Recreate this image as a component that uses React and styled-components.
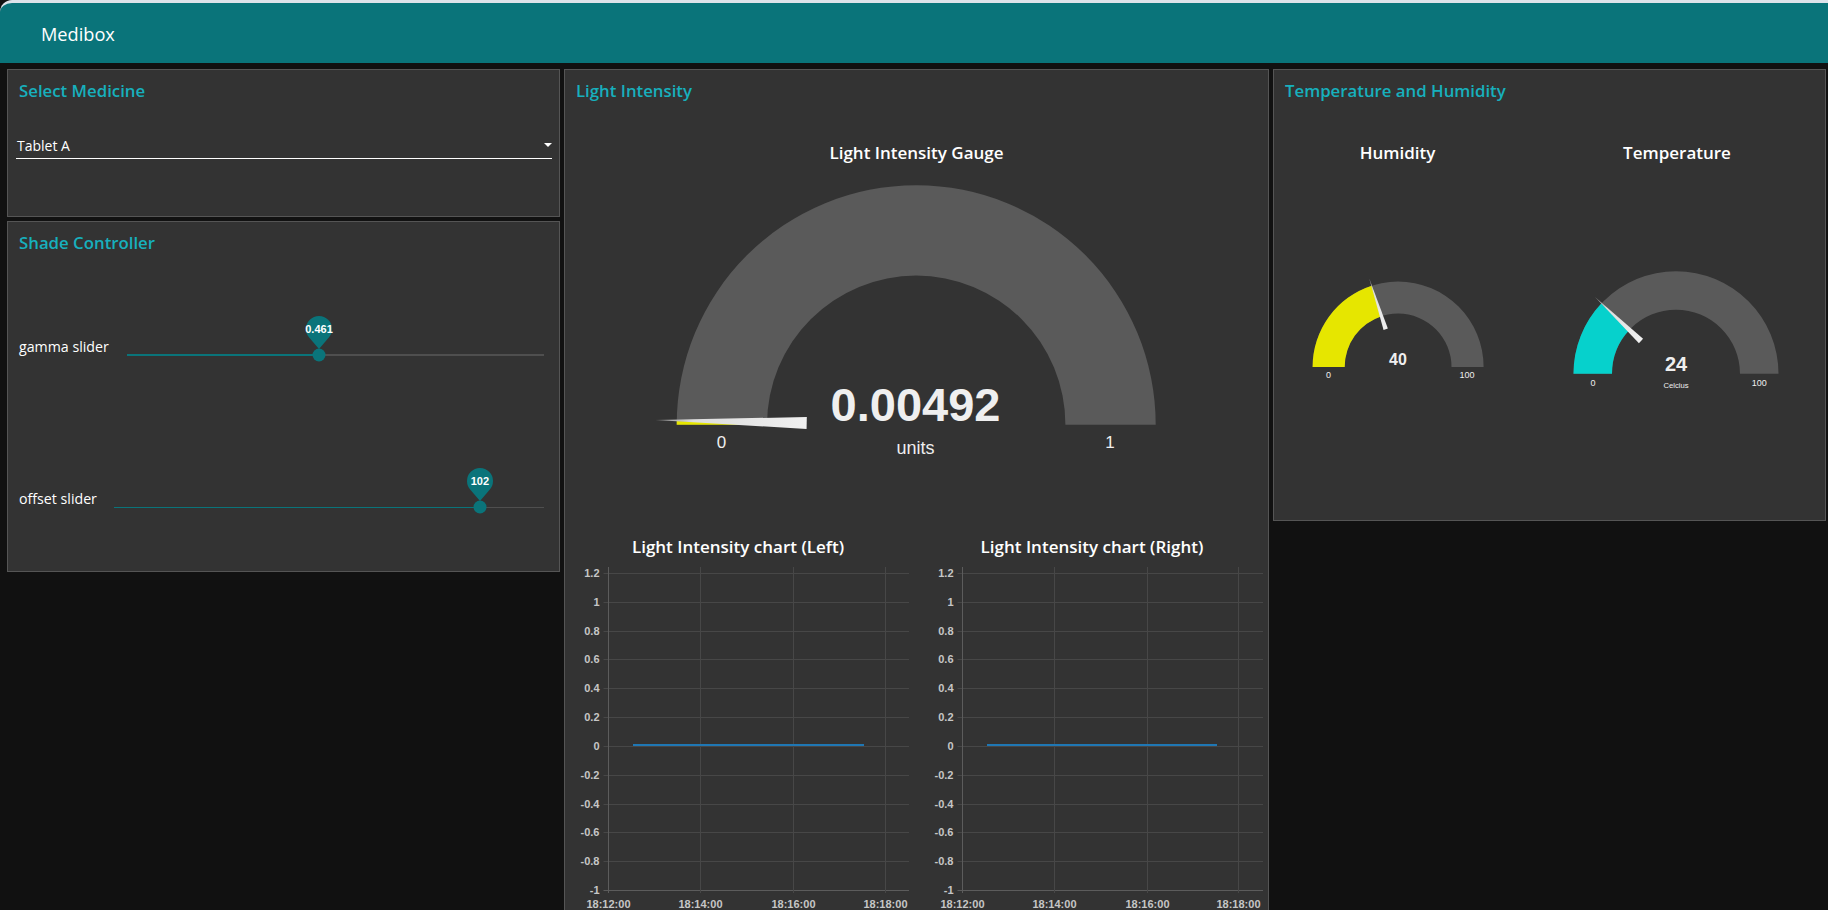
import React from 'react'
import styled, { createGlobalStyle } from 'styled-components'

const TEAL = '#0a747a'
const ARC = '#5a5a5a'
const UI_FONT = "'Open Sans', 'Noto Sans', sans-serif"
const CHART_FONT = "'Liberation Sans', Arial, sans-serif"

// point on a half ring, value is 0..1 from the left end
const ringPoint = (cx, cy, r, v) => {
  const a = Math.PI * (1 - v)
  return [cx + r * Math.cos(a), cy - r * Math.sin(a)]
}

const ringPath = (cx, cy, outer, inner, from, to) => {
  const [x1, y1] = ringPoint(cx, cy, outer, from)
  const [x2, y2] = ringPoint(cx, cy, outer, to)
  const [x3, y3] = ringPoint(cx, cy, inner, to)
  const [x4, y4] = ringPoint(cx, cy, inner, from)
  return `M${x1} ${y1} A${outer} ${outer} 0 0 1 ${x2} ${y2} L${x3} ${y3} A${inner} ${inner} 0 0 0 ${x4} ${y4} Z`
}

const Gauge = ({ width, height, cx, cy, outer, inner, value, color, tip, base, needleWidth, sizes, labels, texts, units }) => {
  const [tx, ty] = tip
  const [bx, by] = base
  const dx = bx - tx
  const dy = by - ty
  const len = Math.hypot(dx, dy)
  const nx = (-dy / len) * (needleWidth / 2)
  const ny = (dx / len) * (needleWidth / 2)
  const gradId = `needle${Math.round(cx)}`
  return (
    <GaugeSvg width={width} height={height} viewBox={`0 0 ${width} ${height}`}>
      <path d={ringPath(cx, cy, outer, inner, 0, 1)} fill={ARC} />
      <path d={ringPath(cx, cy, outer, inner, 0, value)} fill={color} />
      <defs>
        <linearGradient id={gradId} gradientUnits="userSpaceOnUse" x1={tx} y1={ty} x2={bx} y2={by}>
          <stop offset="0" stopColor="#888" />
          <stop offset="0.25" stopColor="#ddd" />
          <stop offset="1" stopColor="#f0f0f0" />
        </linearGradient>
      </defs>
      <polygon
        points={`${tx},${ty} ${bx + nx},${by + ny} ${bx - nx},${by - ny}`}
        fill={`url(#${gradId})`}
      />
      <GaugeValue x={texts.value[0]} y={texts.value[1]} fontSize={sizes.value} textAnchor="middle">{texts.label}</GaugeValue>
      {units && <GaugeSmall x={texts.units[0]} y={texts.units[1]} fontSize={sizes.units} textAnchor="middle">{units}</GaugeSmall>}
      <GaugeSmall x={labels.min[0]} y={labels.min[1]} fontSize={sizes.ends} textAnchor="middle">0</GaugeSmall>
      <GaugeSmall x={labels.max[0]} y={labels.max[1]} fontSize={sizes.ends} textAnchor="middle">{labels.maxText}</GaugeSmall>
    </GaugeSvg>
  )
}

const yTicks = ['1.2', '1', '0.8', '0.6', '0.4', '0.2', '0', '-0.2', '-0.4', '-0.6', '-0.8', '-1']
const xTicks = ['18:12:00', '18:14:00', '18:16:00', '18:18:00']

const LineChart = ({ xs, right, lineFrom, lineTo }) => (
  <ChartSvg width="344" height="349" viewBox="0 0 344 349">
    {yTicks.map((t, i) => {
      const y = Math.floor(12.3 + i * 28.85) + 0.5
      return (
        <g key={t}>
          <line x1={xs[0] - 5} x2={right} y1={y} y2={y} stroke={i === 11 ? '#5c5c5c' : '#474747'} />
          <ChartLabel x={xs[0] - 9} y={y + 0.5} textAnchor="end">{t}</ChartLabel>
        </g>
      )
    })}
    {xs.map((x, i) => (
      <g key={x}>
        <line x1={x} x2={x} y1="6" y2="332" stroke={i === 0 ? '#5c5c5c' : '#474747'} />
        <ChartLabel x={x} y="344" textAnchor="middle">{xTicks[i]}</ChartLabel>
      </g>
    ))}
    <line x1={lineFrom} x2={lineTo} y1="184" y2="184" stroke="#1f77b4" strokeWidth="2" />
  </ChartSvg>
)

const Pin = ({ value }) => (
  <PinBox>
    <svg width="26" height="33" viewBox="0 0 26 33">
      <path d="M13 33 L3.8 22.2 A13 13 0 1 1 22.2 22.2 Z" fill={TEAL} />
    </svg>
    <PinText>{value}</PinText>
  </PinBox>
)

const Slider = ({ label, value, percent, thick, trackLeft, top }) => (
  <SliderRow $top={top}>
    <SliderLabel $width={trackLeft}>{label}</SliderLabel>
    <Track $thick={thick}>
      <TrackFill $thick={thick} style={{ width: `${percent}%` }} />
      <Thumb style={{ left: `${percent}%` }} />
      <PinSlot style={{ left: `${percent}%` }}>
        <Pin value={value} />
      </PinSlot>
    </Track>
  </SliderRow>
)

const App = () => (
  <Page>
    <GlobalStyle />
    <Header>
      <HeaderTitle>Medibox</HeaderTitle>
    </Header>
    <Columns>
      <LeftColumn>
        <Card $height={148}>
          <CardTitle>Select Medicine</CardTitle>
          <SelectBox>
            <SelectText>Tablet A</SelectText>
            <SelectArrow />
          </SelectBox>
        </Card>
        <Card $height={351}>
          <CardTitle>Shade Controller</CardTitle>
          <Slider label="gamma slider" value="0.461" percent={46.05} thick trackLeft={108} top={92} />
          <Slider label="offset slider" value="102" percent={85.1} trackLeft={95} top={134} />
        </Card>
      </LeftColumn>

      <MiddleColumn>
        <Card>
          <CardTitle>Light Intensity</CardTitle>
          <WidgetTitle $top={40}>Light Intensity Gauge</WidgetTitle>
          <GaugeRow>
            <Gauge
              width={703}
              height={363}
              cx={350.2}
              cy={251.7}
              outer={239.5}
              inner={149.2}
              value={0.00492}
              color="#e6e600"
              tip={[89.5, 247]}
              base={[240.7, 250]}
              needleWidth={12}
              sizes={{ value: 47, units: 18, ends: 17 }}
              texts={{ label: '0.00492', value: [349.5, 247.5], units: [349.5, 280.5] }}
              labels={{ min: [155.6, 274.7], max: [544, 274.7], maxText: '1' }}
              units="units"
            />
          </GaugeRow>
          <ChartsRow>
            <ChartBlock>
              <WidgetTitle>Light Intensity chart (Left)</WidgetTitle>
              <LineChart xs={[42.5, 134.5, 227.5, 319.5]} right={343} lineFrom={67} lineTo={298} />
            </ChartBlock>
            <ChartBlock>
              <WidgetTitle>Light Intensity chart (Right)</WidgetTitle>
              <LineChart xs={[42.5, 134.5, 227.5, 318.5]} right={343} lineFrom={67} lineTo={297} />
            </ChartBlock>
          </ChartsRow>
        </Card>
      </MiddleColumn>

      <RightColumn>
        <Card $height={452}>
          <CardTitle>Temperature and Humidity</CardTitle>
          <GaugePair>
            <GaugeCell $width={247}>
              <WidgetTitle $top={40}>Humidity</WidgetTitle>
              <Gauge
                width={247}
                height={260}
                cx={124.1}
                cy={203}
                outer={85.5}
                inner={53.4}
                value={0.4}
                color="#e6e600"
                tip={[95.2, 114.3]}
                base={[111.7, 165.3]}
                needleWidth={4.5}
                sizes={{ value: 16, units: 8, ends: 9 }}
                texts={{ label: '40', value: [124, 201.3] }}
                labels={{ min: [54.5, 214.3], max: [193, 214], maxText: '100' }}
              />
            </GaugeCell>
            <GaugeCell $width={280}>
              <WidgetTitle $top={40}>Temperature</WidgetTitle>
              <Gauge
                width={280}
                height={260}
                cx={139}
                cy={209.7}
                outer={102.5}
                inner={64}
                value={0.24}
                color="#06d1cc"
                tip={[58, 133]}
                base={[104, 177]}
                needleWidth={6}
                sizes={{ value: 20, units: 7.7, ends: 9 }}
                texts={{ label: '24', value: [139, 207], units: [139, 224] }}
                labels={{ min: [56, 222], max: [222.3, 221.7], maxText: '100' }}
                units="Celcius"
              />
            </GaugeCell>
          </GaugePair>
        </Card>
      </RightColumn>
    </Columns>
  </Page>
)

export default App

const GlobalStyle = createGlobalStyle`
  html, body {
    margin: 0;
    padding: 0;
    height: 100%;
    overflow: hidden;
    background: #111111;
  }
`
const Page = styled.div`
  width: 1828px;
  height: 910px;
  overflow: hidden;
  background: #111111;
  font-family: ${UI_FONT};
  color: #fff;
`
const Header = styled.div`
  height: 60px;
  background: ${TEAL};
  border-top: 3px solid #dde3ea;
  border-top-left-radius: 12px;
  display: flex;
  align-items: center;
`
const HeaderTitle = styled.div`
  margin: 2px 0 0 41px;
  font-size: 18.2px;
  line-height: 24px;
`
const Columns = styled.div`
  display: flex;
  gap: 4px;
  padding: 6px 2px 0 7px;
`
const LeftColumn = styled.div`
  width: 553px;
  flex: none;
  display: flex;
  flex-direction: column;
  gap: 4px;
`
const MiddleColumn = styled.div`
  width: 705px;
  flex: none;
`
const RightColumn = styled.div`
  flex: 1;
  min-width: 0;
`
const Card = styled.div`
  box-sizing: border-box;
  height: ${p => (p.$height ? `${p.$height}px` : '900px')};
  background: #333333;
  border: 1px solid #555555;
  padding: 0 11px;
`
const CardTitle = styled.div`
  margin: 10px 0 0;
  font-size: 16.8px;
  font-weight: 600;
  line-height: 22px;
  color: #17b0bd;
`
const SelectBox = styled.div`
  margin: 30px -4px 0 -3px;
  height: 26px;
  border-bottom: 1px solid #ffffff;
  display: flex;
  align-items: center;
  justify-content: space-between;
`
const SelectText = styled.span`
  margin-left: 1px;
  font-size: 14px;
`
const SelectArrow = styled.span`
  width: 0;
  height: 0;
  border-left: 4px solid transparent;
  border-right: 4px solid transparent;
  border-top: 4px solid #ffffff;
`
const SliderRow = styled.div`
  margin-top: ${p => p.$top}px;
  margin-right: 4px;
  display: flex;
  align-items: center;
`
const SliderLabel = styled.div`
  width: ${p => p.$width}px;
  flex: none;
  font-size: 14.2px;
  line-height: 18px;
  position: relative;
  top: -8px;
`
const Track = styled.div`
  position: relative;
  flex: 1;
  height: ${p => (p.$thick ? 2 : 1)}px;
  background: #4f4f4f;
`
const TrackFill = styled.div`
  height: ${p => (p.$thick ? 2 : 1)}px;
  background: ${TEAL};
`
const Thumb = styled.div`
  position: absolute;
  top: 50%;
  width: 13px;
  height: 13px;
  border-radius: 50%;
  background: ${TEAL};
  transform: translate(-50%, -50%);
`
const PinSlot = styled.div`
  position: absolute;
  bottom: 7px;
  transform: translateX(-50%);
`
const PinBox = styled.div`
  position: relative;
  width: 26px;
  height: 33px;

  svg {
    display: block;
  }
`
const PinText = styled.div`
  position: absolute;
  top: 7px;
  left: -4px;
  right: -4px;
  text-align: center;
  font-family: ${CHART_FONT};
  font-size: 11px;
  font-weight: 700;
  line-height: 12px;
`
const WidgetTitle = styled.div`
  margin-top: ${p => p.$top || 0}px;
  text-align: center;
  font-size: 17px;
  font-weight: 600;
  line-height: 22px;
  color: #ffffff;
`
const GaugeRow = styled.div`
  margin: 9px 0 0 -10px;
  display: flex;
`
const GaugeSvg = styled.svg`
  display: block;
  flex: none;
`
const GaugeValue = styled.text`
  font-family: ${CHART_FONT};
  font-weight: 700;
  fill: #efefef;
`
const GaugeSmall = styled.text`
  font-family: ${CHART_FONT};
  fill: #efefef;
`
const ChartsRow = styled.div`
  margin-left: -10px;
  display: flex;
  gap: 10px;
`
const ChartBlock = styled.div`
  width: 344px;
  flex: none;
`
const ChartSvg = styled.svg`
  display: block;
  margin-top: 3px;
`
const ChartLabel = styled.text`
  font-family: ${CHART_FONT};
  font-size: 11px;
  font-weight: 700;
  fill: #c6c6c6;
  dominant-baseline: middle;
`
const GaugePair = styled.div`
  margin-left: -11px;
  display: flex;
  gap: 16px;
`
const GaugeCell = styled.div`
  width: ${p => p.$width}px;
  flex: none;
`
